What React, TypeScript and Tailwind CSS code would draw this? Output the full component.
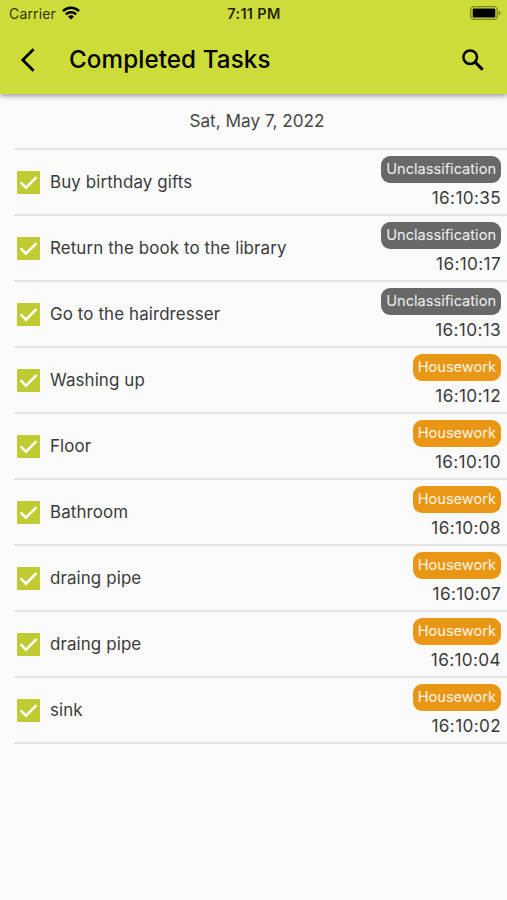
import clsx from "clsx";

type Category = "Unclassification" | "Housework";

interface Task {
  title: string;
  category: Category;
  time: string;
}

const tasks: Task[] = [
  { title: "Buy birthday gifts", category: "Unclassification", time: "16:10:35" },
  { title: "Return the book to the library", category: "Unclassification", time: "16:10:17" },
  { title: "Go to the hairdresser", category: "Unclassification", time: "16:10:13" },
  { title: "Washing up", category: "Housework", time: "16:10:12" },
  { title: "Floor", category: "Housework", time: "16:10:10" },
  { title: "Bathroom", category: "Housework", time: "16:10:08" },
  { title: "draing pipe", category: "Housework", time: "16:10:07" },
  { title: "draing pipe", category: "Housework", time: "16:10:04" },
  { title: "sink", category: "Housework", time: "16:10:02" },
];

function WifiIcon() {
  return (
    <svg viewBox="0 0 18 14" className="-mt-0.5 h-3.5 w-[18px]" fill="none" stroke="currentColor" strokeWidth="2.5">
      <path d="M1 5.1a11.4 11.4 0 0 1 16 0" />
      <path d="M3.9 8.3a7.3 7.3 0 0 1 10.2 0" />
      <path d="M9 13.6 6 10.6a4.3 4.3 0 0 1 6 0Z" fill="currentColor" stroke="none" />
    </svg>
  );
}

function BatteryIcon() {
  return (
    <svg viewBox="0 0 31 14" className="-mt-0.5 h-3.5 w-[31px]">
      <rect x="0.7" y="0.7" width="26.6" height="12.6" rx="3.6" fill="none" stroke="#000" strokeOpacity="0.4" strokeWidth="1.3" />
      <rect x="2.7" y="2.5" width="22.6" height="9" rx="1.2" fill="#000" />
      <path d="M28.7 4.7c1.2.5 1.8 1.3 1.8 2.3s-.6 1.8-1.8 2.3Z" fill="#000" fillOpacity="0.4" />
    </svg>
  );
}

function StatusBar() {
  return (
    <div className="grid h-7 grid-cols-[1fr_auto_1fr] items-center pl-[7px] pr-[6px]">
      <div className="flex items-center gap-1.5 pl-0.5">
        <span className="text-[14px] leading-none tracking-[0.15px] text-black/80">Carrier</span>
        <WifiIcon />
      </div>
      <span className="text-[14.5px] font-semibold leading-none tracking-[0.35px] text-black/85">7:11 PM</span>
      <div className="flex justify-end">
        <BatteryIcon />
      </div>
    </div>
  );
}

function Header() {
  return (
    <header className="relative h-[94px] bg-[#cddc39] text-black shadow-[0_2px_5px_rgba(0,0,0,0.38)]">
      <StatusBar />
      <div className="flex h-[63px] items-center pl-[20px] pr-[23px]">
        <button aria-label="Back">
          <svg viewBox="0 0 16 24" className="h-6 w-4" fill="none" stroke="currentColor" strokeWidth="2.8">
            <path d="M13.6 1.2 2.8 12l10.8 10.8" />
          </svg>
        </button>
        <h1 className="ml-[33px] flex-1 pt-px text-[24.2px] font-medium leading-none tracking-[0.1px]">Completed Tasks</h1>
        <button aria-label="Search">
          <svg viewBox="0 0 22 22" className="size-[22px]" fill="none" stroke="currentColor" strokeWidth="2.5">
            <circle cx="8.2" cy="8.2" r="6.8" />
            <path d="m13 13 7.6 7.6" strokeWidth="3" />
          </svg>
        </button>
      </div>
    </header>
  );
}

function Checkbox() {
  return (
    <span className="flex size-[23px] shrink-0 items-center justify-center rounded-[1px] bg-[#c0ca33]">
      <svg viewBox="0 0 23 23" className="size-[23px]" fill="none" stroke="#fff" strokeWidth="2.5">
        <path d="m3.6 11.4 5.4 5.3L19.5 6.2" />
      </svg>
    </span>
  );
}

function TaskRow({ task }: { task: Task }) {
  return (
    <li className="flex h-[66px] items-center border-b-2 border-[#e4e4e4] pl-[3px] pr-[6px]">
      <Checkbox />
      <span className="ml-2.5 flex-1 text-[16.9px] leading-6 tracking-[0.12px]">{task.title}</span>
      <div className="flex flex-col items-end pt-0.5">
        <span
          className={clsx(
            "flex h-[27px] items-center rounded-[9px] px-[5px] text-[14.6px] text-white/90",
            task.category === "Housework" ? "bg-[#e99614]" : "bg-[#686868]",
          )}
        >
          {task.category}
        </span>
        <span className="mt-[3px] text-[17.2px] leading-6 tracking-[0.35px]">{task.time}</span>
      </div>
    </li>
  );
}

export default function App() {
  return (
    <div className="flex h-[900px] w-[507px] flex-col overflow-hidden bg-[#fafafa] font-['Inter',sans-serif] text-[#3a3a3a]">
      <Header />
      <main>
        <p className="flex h-[54px] items-center justify-center pl-[7px] text-[17.2px] text-[#484848]">
          Sat, May 7, 2022
        </p>
        <ul className="ml-3.5 border-t-2 border-[#e4e4e4]">
          {tasks.map((task) => (
            <TaskRow key={task.time} task={task} />
          ))}
        </ul>
      </main>
    </div>
  );
}
